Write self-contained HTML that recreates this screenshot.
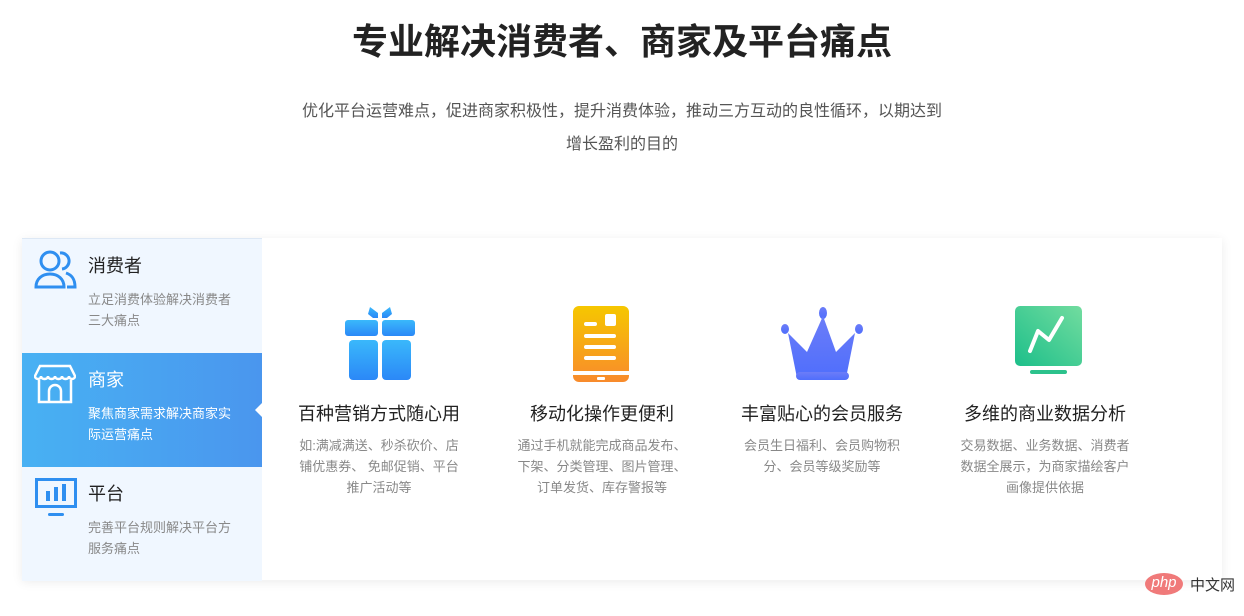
<!DOCTYPE html>
<html><head><meta charset="utf-8"><style>
body{margin:0;width:1244px;height:616px;background:#fff;font-family:"Liberation Sans","Noto Sans CJK SC",sans-serif;position:relative;overflow:hidden}
.t{position:absolute;left:0;width:1244px;text-align:center;top:16px;font-size:36px;font-weight:bold;color:#222;line-height:52px}
.s{position:absolute;left:0;width:1244px;text-align:center;top:95px;font-size:16px;color:#555;line-height:33px}
.card{position:absolute;left:22px;top:238px;width:1200px;height:342px;background:#fff;box-shadow:0 2px 10px rgba(0,0,0,.08)}
.left{position:absolute;left:0;top:0;width:240px;height:342px;background:#f0f7ff;border-top:1px solid #dde8f5}
.it{position:absolute;left:0;width:240px;height:114px}
.it h4{position:absolute;left:66px;top:13px;margin:0;font-size:18px;font-weight:normal;color:#222}
.it p{position:absolute;left:66px;top:50px;margin:0;width:150px;font-size:13px;line-height:21px;color:#888}
.act{background:linear-gradient(90deg,#48b1f3,#4a96ee)}
.act h4,.act p{color:#fff}
.act:after{content:"";position:absolute;right:0;top:50px;border:7px solid transparent;border-right-color:#fff}
.ic{position:absolute;left:12px;top:10px}
.col{position:absolute;top:0;width:200px;text-align:center}
.col h5{position:absolute;top:162px;left:-20px;width:240px;margin:0;font-size:18px;font-weight:normal;color:#222}
.col p{position:absolute;top:197px;left:0;width:180px;margin:0 10px;font-size:13px;line-height:21px;color:#888}
.col svg{position:absolute;top:68px;left:66px}
</style></head><body>
<div class="t">专业解决消费者、商家及平台痛点</div>
<div class="s">优化平台运营难点，促进商家积极性，提升消费体验，推动三方互动的良性循环，以期达到<br>增长盈利的目的</div>
<div class="card">
<div class="left">
<div class="it" style="top:0">
<svg class="ic" width="44" height="40" viewBox="0 0 44 40"><g fill="none" stroke="#2f8ff0" stroke-width="3"><circle cx="16" cy="12" r="9"/><path d="M2 38c0-8 6-13 14-13s14 5 14 13z"/><path d="M26 4a8 8 0 0 1 2 16M32 24c6 2 9 6 9 14h-8"/></g></svg>
<h4>消费者</h4><p>立足消费体验解决消费者三大痛点</p></div>
<div class="it act" style="top:114px">
<svg class="ic" width="42" height="42" viewBox="0 0 42 42"><g fill="none" stroke="#fff" stroke-width="2.5"><path d="M6 3h30l5 10c0 4-6 4-6 0 0 4-7 4-7 0 0 4-7 4-7 0 0 4-7 4-7 0 0 4-7 4-7 0 0 4-6 4-6 0z"/><path d="M5 17v22h32V17M15 39V28a6 6 0 0 1 12 0v11"/></g></svg>
<h4>商家</h4><p>聚焦商家需求解决商家实际运营痛点</p></div>
<div class="it" style="top:228px">
<svg class="ic" width="44" height="42" viewBox="0 0 44 42"><g fill="#2f8ff0"><path d="M1 1h42v30H1zM4 4v24h36V4z"/><rect x="14" y="36" width="16" height="3" rx="1.5"/><rect x="12" y="14" width="4" height="10"/><rect x="20" y="10" width="4" height="14"/><rect x="28" y="7" width="4" height="17"/></g></svg>
<h4>平台</h4><p>完善平台规则解决平台方服务痛点</p></div>
</div>
<div class="col" style="left:257px">
<svg width="70" height="74" viewBox="0 0 70 74"><defs><linearGradient id="g1" x1="0" y1="0" x2="0" y2="1"><stop offset="0" stop-color="#3ab8fb"/><stop offset="1" stop-color="#2b88f7"/></linearGradient></defs><g fill="url(#g1)"><path d="M25 1l8 6v5h-5l-5-4zM45 1l-8 6v5h5l5-4z"/><rect x="0" y="14" width="33" height="16" rx="3"/><rect x="37" y="14" width="33" height="16" rx="3"/><rect x="4" y="34" width="29" height="40" rx="4"/><rect x="37" y="34" width="29" height="40" rx="4"/></g></svg>
<h5>百种营销方式随心用</h5><p style="width:168px;margin:0 16px">如:满减满送、秒杀砍价、店铺优惠券、 免邮促销、平台推广活动等</p></div>
<div class="col" style="left:480px">
<svg width="70" height="76" viewBox="0 0 70 76" style="left:70px"><defs><linearGradient id="g2" x1="0" y1="0" x2="0" y2="1"><stop offset="0" stop-color="#f6c700"/><stop offset="1" stop-color="#f88b2c"/></linearGradient></defs><path d="M7 0h44a6 6 0 0 1 6 6v59H1V6a6 6 0 0 1 6-6zM1 69h56v1a6 6 0 0 1-6 6H7a6 6 0 0 1-6-6z" fill="url(#g2)"/><g fill="#fff"><rect x="33" y="8" width="11" height="12" rx="2"/><rect x="12" y="16" width="13" height="4" rx="2"/><rect x="12" y="28" width="32" height="4" rx="2"/><rect x="12" y="39" width="32" height="4" rx="2"/><rect x="12" y="50" width="32" height="4" rx="2"/><rect x="25" y="71" width="8" height="3" rx="1"/></g></svg>
<h5>移动化操作更便利</h5><p>通过手机就能完成商品发布、下架、分类管理、图片管理、订单发货、库存警报等</p></div>
<div class="col" style="left:700px">
<svg width="90" height="76" viewBox="0 0 90 76" style="left:58px"><defs><linearGradient id="g3" x1="0" y1="0" x2="0" y2="1"><stop offset="0" stop-color="#6c7df8"/><stop offset="1" stop-color="#4f6efc"/></linearGradient></defs><g fill="url(#g3)"><ellipse cx="43" cy="7" rx="4" ry="6"/><ellipse cx="5" cy="23" rx="4" ry="5"/><ellipse cx="79" cy="23" rx="4" ry="5"/><path d="M43 10l13 36 19-19-9 45H17L8 27l19 19z"/><rect x="16" y="66" width="53" height="8" rx="4"/></g></svg>
<h5>丰富贴心的会员服务</h5><p>会员生日福利、会员购物积分、会员等级奖励等</p></div>
<div class="col" style="left:923px">
<svg width="70" height="72" viewBox="0 0 70 72" style="left:70px"><defs><linearGradient id="g4" x1="1" y1="0" x2="0" y2="1"><stop offset="0" stop-color="#72dc9f"/><stop offset="1" stop-color="#1dbf8a"/></linearGradient></defs><rect x="0" y="0" width="67" height="60" rx="5" fill="url(#g4)"/><rect x="15" y="64" width="37" height="4" rx="2" fill="#2cc28c"/><path d="M15 45l8-20 11 9 13-22" fill="none" stroke="#fff" stroke-width="4" stroke-linecap="round" stroke-linejoin="round"/></svg>
<h5>多维的商业数据分析</h5><p>交易数据、业务数据、消费者数据全展示，为商家描绘客户画像提供依据</p></div>
</div>
<div style="position:absolute;left:1145px;top:573px;width:38px;height:22px;border-radius:50%;background:#f07a7a;color:#fff;font-style:italic;font-size:15px;text-align:center;line-height:20px">php</div>
<div style="position:absolute;left:1190px;top:574px;font-size:15px;color:#333">中文网</div>
</body></html>
